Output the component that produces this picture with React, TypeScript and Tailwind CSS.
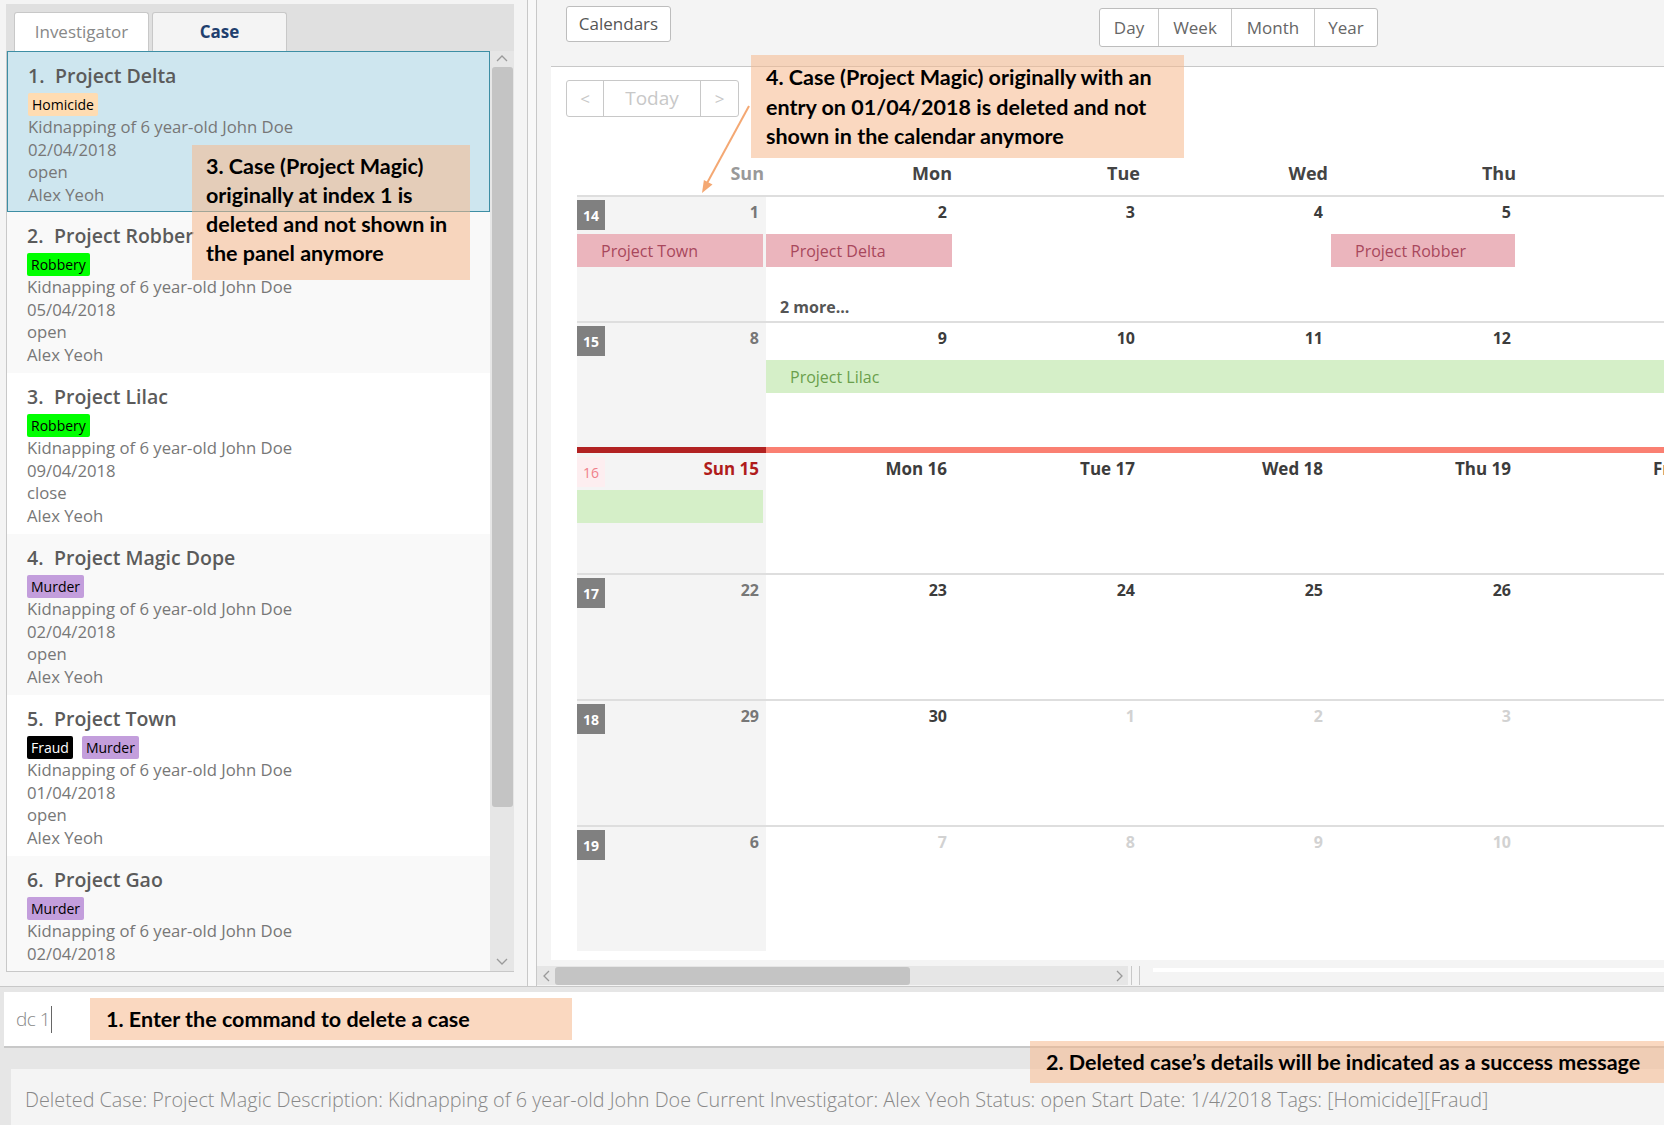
import React from "react";

type Case = { n: number; name: string; tags: string[]; date: string; status: string };

const cases: Case[] = [
  { n: 1, name: "Project Delta", tags: ["Homicide"], date: "02/04/2018", status: "open" },
  { n: 2, name: "Project Robber", tags: ["Robbery"], date: "05/04/2018", status: "open" },
  { n: 3, name: "Project Lilac", tags: ["Robbery"], date: "09/04/2018", status: "close" },
  { n: 4, name: "Project Magic Dope", tags: ["Murder"], date: "02/04/2018", status: "open" },
  { n: 5, name: "Project Town", tags: ["Fraud", "Murder"], date: "01/04/2018", status: "open" },
  { n: 6, name: "Project Gao", tags: ["Murder"], date: "02/04/2018", status: "open" },
];

const tagStyle: Record<string, string> = {
  Homicide: "bg-[#ffdcb2] text-black",
  Robbery: "bg-[#00ff00] text-black",
  Murder: "bg-[#c39edc] text-black",
  Fraud: "bg-black text-white",
};

const COLS = "grid grid-cols-[189px_188px_188px_188px_188px_188px_188px]";

function CaseCard({ c, i }: { c: Case; i: number }) {
  const bg =
    i === 0
      ? "bg-[#cee6ef] border border-[#3d8ea4]"
      : i % 2 === 1
      ? "bg-[#f9f9f9]"
      : "bg-white";
  return (
    <div className={`h-[161px] shrink-0 pl-[20px] pt-[9px] ${bg}`}>
      <div className="h-[30px] flex items-center text-[19.5px] font-semibold text-[#5b5b5b]">
        <span className="w-[27px]">{c.n}.</span>
        {c.name}
      </div>
      <div className="flex gap-[9px] mt-[2px]">
        {c.tags.map((t) => (
          <span key={t} className={`h-[23px] leading-[23px] px-[4px] rounded-[2px] text-[14px] ${tagStyle[t]}`}>
            {t}
          </span>
        ))}
      </div>
      <div className="text-[16.7px] leading-[22.5px] text-[#777]">
        <div>Kidnapping of 6 year-old John Doe</div>
        <div>{c.date}</div>
        <div>{c.status}</div>
        <div>Alex Yeoh</div>
      </div>
    </div>
  );
}

function Chevron({ dir }: { dir: "up" | "down" | "left" | "right" }) {
  const d = {
    up: "M2 8 L7 3 L12 8",
    down: "M2 3 L7 8 L12 3",
    left: "M8 2 L3 7 L8 12",
    right: "M3 2 L8 7 L3 12",
  }[dir];
  const box = dir === "up" || dir === "down" ? "0 0 14 11" : "0 0 11 14";
  return (
    <svg viewBox={box} className={dir === "up" || dir === "down" ? "w-[14px] h-[11px]" : "w-[11px] h-[14px]"}>
      <path d={d} fill="none" stroke="#9a9a9a" strokeWidth="1.3" />
    </svg>
  );
}

function LeftPane() {
  return (
    <div className="w-[527px] shrink-0 flex flex-col pl-[6px] pr-[13px] pt-[4px]">
      <div className="h-[47px] bg-[#e0e0e0] flex items-end gap-[3px] pl-[8px]">
        <div className="w-[135px] h-[39px] bg-white border border-b-0 border-[#c8c8c8] rounded-t-[3px] flex items-center justify-center text-[17px] text-[#888]">
          Investigator
        </div>
        <div className="w-[135px] h-[39px] bg-[#f4f4f4] border border-b-0 border-[#c8c8c8] rounded-t-[3px] flex items-center justify-center text-[17px] font-bold text-[#1f3f6e]">
          Case
        </div>
      </div>
      <div className="h-[921px] flex border-l border-b border-[#c8c8c8] bg-white">
        <div className="flex-1 flex flex-col overflow-hidden">
          {cases.map((c, i) => (
            <CaseCard key={c.n} c={c} i={i} />
          ))}
        </div>
        <div className="w-[24px] bg-[#e6e6e6] flex flex-col items-center pt-[2px]">
          <Chevron dir="up" />
          <div className="w-[21px] h-[740px] mt-[3px] bg-[#c4c4c4] rounded-[3px]" />
          <div className="flex-1" />
          <div className="pb-[4px]">
            <Chevron dir="down" />
          </div>
        </div>
      </div>
    </div>
  );
}

type Week = { wk: number; days: (number | string)[]; outFrom?: number; today?: boolean };

const weeks: Week[] = [
  { wk: 14, days: [1, 2, 3, 4, 5, 6, 7] },
  { wk: 15, days: [8, 9, 10, 11, 12, 13, 14] },
  { wk: 16, days: ["Sun 15", "Mon 16", "Tue 17", "Wed 18", "Thu 19", "Fri 20", "Sat 21"], today: true },
  { wk: 17, days: [22, 23, 24, 25, 26, 27, 28] },
  { wk: 18, days: [29, 30, 1, 2, 3, 4, 5], outFrom: 2 },
  { wk: 19, days: [6, 7, 8, 9, 10, 11, 12], outFrom: 1 },
];

const colStart = ["col-start-1", "col-start-2", "col-start-3", "col-start-4", "col-start-5", "col-start-6", "col-start-7"];

function WeekRow({ w }: { w: Week }) {
  return (
    <div className="flex flex-col">
      {w.today ? (
        <div className="grid grid-cols-[189px_1fr] h-[6px]">
          <div className="bg-[#b22222]" />
          <div className="bg-[#fa8072]" />
        </div>
      ) : (
        <div className="h-[2px] bg-[#dedede]" />
      )}
      <div className={`${COLS} grid-rows-[37px_33px_1fr] ${w.today ? "h-[120px]" : "h-[124px]"}`}>
        {w.days.map((d, i) => {
          let color = "text-[#3c3c3c]";
          if (w.today && i === 0) color = "text-[#b01c1c]";
          else if (i === 0) color = "text-[#777]";
          else if (w.outFrom !== undefined && i >= w.outFrom) color = "text-[#d2d2d2]";
          return (
            <div
              key={i}
              className={`${colStart[i]} row-start-1 row-span-3 ${i === 0 ? "bg-[#f4f4f4]" : ""} flex items-start justify-between pr-[7px]`}
            >
              {i === 0 ? (
                w.today ? (
                  <div className="mt-[4px] w-[28px] h-[30px] bg-[#fdeef0] text-[#f0808a] text-[14px] flex items-center justify-center">
                    {w.wk}
                  </div>
                ) : (
                  <div className="mt-[3px] w-[28px] h-[30px] bg-[#808080] text-white text-[14px] font-bold flex items-center justify-center">
                    {w.wk}
                  </div>
                )
              ) : (
                <span />
              )}
              <span className={`${w.today ? "mt-[4px]" : "mt-[3px]"} leading-[24px] font-bold ${w.today ? "text-[17px]" : "text-[16px]"} ${color}`}>{d}</span>
            </div>
          );
        })}
        {w.wk === 14 && (
          <>
            <div className="col-start-1 row-start-2 mr-[3px] bg-[#ebb5bd] text-[#a8475c] text-[16px] flex items-center pl-[24px]">
              Project Town
            </div>
            <div className="col-start-2 row-start-2 mr-[2px] bg-[#ebb5bd] text-[#a8475c] text-[16px] flex items-center pl-[24px]">
              Project Delta
            </div>
            <div className="col-start-5 row-start-2 ml-[1px] mr-[3px] bg-[#ebb5bd] text-[#a8475c] text-[16px] flex items-center pl-[24px]">
              Project Robber
            </div>
            <div className="col-start-2 row-start-3 pl-[14px] pt-[28px] text-[16px] font-bold text-[#555]">2 more...</div>
          </>
        )}
        {w.wk === 15 && (
          <div className="col-start-2 col-span-6 row-start-2 bg-[#d5efc8] text-[#6a9f4c] text-[16px] flex items-center pl-[24px]">
            Project Lilac
          </div>
        )}
        {w.wk === 16 && <div className="col-start-1 row-start-2 mr-[3px] bg-[#d5efc8]" />}
      </div>
    </div>
  );
}

function RightPane() {
  const views = [
    { t: "Day", w: "w-[58px]" },
    { t: "Week", w: "w-[73px]" },
    { t: "Month", w: "w-[83px]" },
    { t: "Year", w: "w-[63px]" },
  ];
  return (
    <div className="flex-1 min-w-0 flex flex-col bg-[#f4f4f4]">
      <div className="h-[66px] shrink-0 flex items-start">
        <div className="ml-[29px] mt-[6px] w-[105px] h-[36px] bg-white border border-[#bdbdbd] rounded-[3px] flex items-center justify-center text-[17px] text-[#555]">
          Calendars
        </div>
        <div className="ml-[428px] mt-[8px] h-[39px] flex bg-white border border-[#bdbdbd] rounded-[3px]">
          {views.map((v, i) => (
            <div
              key={v.t}
              className={`${v.w} flex items-center justify-center text-[17px] text-[#666] ${i > 0 ? "border-l border-[#c8c8c8]" : ""}`}
            >
              {v.t}
            </div>
          ))}
        </div>
      </div>
      <div className="ml-[14px] h-[894px] shrink-0 bg-white border-t border-[#c8c8c8] overflow-hidden flex flex-col">
        <div className="ml-[15px] mt-[13px] h-[37px] w-[173px] flex border border-[#c8c8c8] rounded-[3px] text-[#c8c8c8]">
          <div className="w-[36px] flex items-center justify-center text-[17px]">&lt;</div>
          <div className="w-[98px] flex items-center justify-center text-[19px] border-x border-[#c8c8c8]">Today</div>
          <div className="flex-1 flex items-center justify-center text-[17px]">&gt;</div>
        </div>
        <div className="pl-[26px]">
          <div className={`${COLS} h-[78px] items-end pb-[9px]`}>
            {["Sun", "Mon", "Tue", "Wed", "Thu", "Fri", "Sat"].map((d, i) => (
              <div key={d} className={`text-right pr-[2px] text-[18px] leading-[26px] font-bold ${i === 0 ? "text-[#999]" : "text-[#444]"}`}>
                {d}
              </div>
            ))}
          </div>
          {weeks.map((w) => (
            <WeekRow key={w.wk} w={w} />
          ))}
        </div>
      </div>
      <div className="h-[27px] flex items-start pt-[6px]">
        <div className="w-[591px] h-[19px] bg-[#e6e6e6] flex items-center">
          <div className="w-[18px] flex justify-center">
            <Chevron dir="left" />
          </div>
          <div className="w-[355px] h-[18px] bg-[#c4c4c4] rounded-[3px]" />
          <div className="flex-1" />
          <div className="w-[18px] flex justify-center">
            <Chevron dir="right" />
          </div>
        </div>
        <div className="ml-[3px] w-px h-[19px] bg-[#c8c8c8]" />
        <div className="ml-[7px] w-px h-[19px] bg-[#c8c8c8]" />
        <div className="ml-[13px] mt-[2px] flex-1 h-[4px] bg-white" />
      </div>
    </div>
  );
}

export default function App() {
  const note = "absolute bg-[rgba(245,184,140,0.55)] font-['Lato',sans-serif] font-bold text-black text-[21.5px]";
  return (
    <div className="relative w-[1664px] h-[1125px] overflow-hidden bg-[#f4f4f4] flex flex-col font-['Open_Sans',sans-serif]">
      <div className="h-[987px] shrink-0 flex border-b border-[#c8c8c8]">
        <LeftPane />
        <div className="w-[10px] shrink-0 border-l border-r border-[#c8c8c8] bg-[#f8f8f8]" />
        <RightPane />
      </div>
      <div className="h-[61px] shrink-0 bg-[#e6e6e6] pt-[5px] pl-[4px]">
        <div className="h-[56px] bg-white border-b-2 border-[#c8c8c8] flex items-center pl-[12px] text-[19px] font-light text-[#888] tracking-[-0.5px]">
          dc 1<span className="ml-[1px] w-px h-[27px] bg-[#666]" />
        </div>
      </div>
      <div className="flex-1 bg-[#e6e6e6] pt-[21px] pl-[11px]">
        <div className="h-full bg-[#f4f4f4] pl-[14px] pt-[18px] text-[19.8px] leading-[26px] font-light text-[#888] whitespace-nowrap">
          Deleted Case: Project Magic Description: Kidnapping of 6 year-old John Doe Current Investigator: Alex Yeoh Status: open Start Date: 1/4/2018 Tags: [Homicide][Fraud]
        </div>
      </div>

      <div className={`${note} left-[192px] top-[145px] w-[278px] h-[135px] pl-[14px] pt-[7px] leading-[29px]`}>
        <div>3. Case (Project Magic)</div>
        <div>originally at index 1 is</div>
        <div>deleted and not shown in</div>
        <div>the panel anymore</div>
      </div>
      <div className={`${note} left-[751px] top-[55px] w-[433px] h-[103px] pl-[15px] pt-[8px] leading-[29.5px]`}>
        <div>4. Case (Project Magic) originally with an</div>
        <div>entry on 01/04/2018 is deleted and not</div>
        <div>shown in the calendar anymore</div>
      </div>
      <svg className="absolute left-[695px] top-[100px] w-[60px] h-[100px]" viewBox="0 0 60 100">
        <line x1="54" y1="6" x2="11" y2="85" stroke="#f4a873" strokeWidth="2" />
        <polygon points="7,93 17.5,84.6 8.9,80" fill="#f4a873" />
      </svg>
      <div className={`${note} left-[90px] top-[998px] w-[482px] h-[42px] pl-[16px] flex items-center`}>
        1. Enter the command to delete a case
      </div>
      <div className={`${note} left-[1030px] top-[1041px] w-[634px] h-[42px] pl-[16px] flex items-center`}>
        2. Deleted case’s details will be indicated as a success message
      </div>
    </div>
  );
}
